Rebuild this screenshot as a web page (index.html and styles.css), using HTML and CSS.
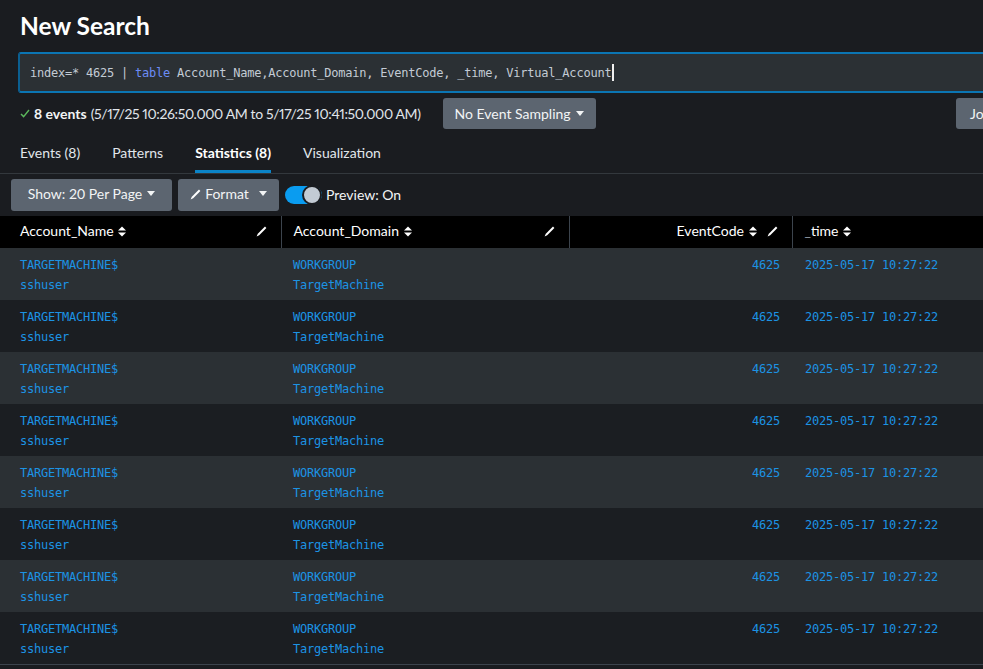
FILE: index.html
```html
<!DOCTYPE html>
<html>
<head>
<meta charset="utf-8">
<link rel="stylesheet" href="styles.css">
</head>
<body>
<div class="page">
  <h1 class="title">New Search</h1>

  <div class="search-bar">
    <span class="query">index=* 4625 | <span class="kw">table</span> Account_Name,Account_Domain, EventCode, _time, Virtual_Account</span><span class="caret"></span>
  </div>

  <div class="status">
    <svg class="check" width="10" height="9" viewBox="0 0 10 9"><path d="M1 5 L3.6 7.6 L9 1" fill="none" stroke="#5cb85c" stroke-width="1.4"/></svg>
    <span class="count">8 events</span>
    <span class="range">(5/17/25 10:26:50.000 AM to 5/17/25 10:41:50.000 AM)</span>
    <button class="btn sampling">No Event Sampling <span class="tri"></span></button>
    <button class="btn job">Job</button>
  </div>

  <nav class="tabs">
    <span class="tab">Events (8)</span>
    <span class="tab">Patterns</span>
    <span class="tab active">Statistics (8)</span>
    <span class="tab">Visualization</span>
  </nav>

  <div class="toolbar">
    <button class="btn show">Show: 20 Per Page <span class="tri"></span></button>
    <button class="btn format"><svg class="pen" width="11" height="11" viewBox="0 0 11 11"><path d="M9 0.6 L10.4 2 L3.2 9.2 L0.6 10.4 L1.8 7.8 Z" fill="#fff"/></svg>Format <span class="tri gap"></span></button>
    <span class="toggle"><span class="knob"></span></span>
    <span class="preview">Preview: On</span>
  </div>

  <table class="results">
    <colgroup>
      <col class="c1"><col class="c2"><col class="c3"><col class="c4">
    </colgroup>
    <thead>
      <tr>
        <th><span class="hl">Account_Name <svg class="sort" width="8" height="11" viewBox="0 0 8 11"><path d="M0 4.5 L4 0.5 L8 4.5 Z M0 6.5 L4 10.5 L8 6.5 Z" fill="#fff"/></svg></span><svg class="pen" width="11" height="11" viewBox="0 0 11 11"><path d="M9 0.6 L10.4 2 L3.2 9.2 L0.6 10.4 L1.8 7.8 Z" fill="#fff"/></svg></th>
        <th><span class="hl">Account_Domain <svg class="sort" width="8" height="11" viewBox="0 0 8 11"><path d="M0 4.5 L4 0.5 L8 4.5 Z M0 6.5 L4 10.5 L8 6.5 Z" fill="#fff"/></svg></span><svg class="pen" width="11" height="11" viewBox="0 0 11 11"><path d="M9 0.6 L10.4 2 L3.2 9.2 L0.6 10.4 L1.8 7.8 Z" fill="#fff"/></svg></th>
        <th class="num"><span class="hl">EventCode <svg class="sort" width="8" height="11" viewBox="0 0 8 11"><path d="M0 4.5 L4 0.5 L8 4.5 Z M0 6.5 L4 10.5 L8 6.5 Z" fill="#fff"/></svg></span><svg class="pen" width="11" height="11" viewBox="0 0 11 11"><path d="M9 0.6 L10.4 2 L3.2 9.2 L0.6 10.4 L1.8 7.8 Z" fill="#fff"/></svg></th>
        <th><span class="hl"><span class="us">_</span>time <svg class="sort" width="8" height="11" viewBox="0 0 8 11"><path d="M0 4.5 L4 0.5 L8 4.5 Z M0 6.5 L4 10.5 L8 6.5 Z" fill="#fff"/></svg></span></th>
      </tr>
    </thead>
    <tbody>
      <tr><td>TARGETMACHINE$<br>sshuser</td><td>WORKGROUP<br>TargetMachine</td><td class="num">4625</td><td>2025-05-17 10:27:22</td></tr>
      <tr><td>TARGETMACHINE$<br>sshuser</td><td>WORKGROUP<br>TargetMachine</td><td class="num">4625</td><td>2025-05-17 10:27:22</td></tr>
      <tr><td>TARGETMACHINE$<br>sshuser</td><td>WORKGROUP<br>TargetMachine</td><td class="num">4625</td><td>2025-05-17 10:27:22</td></tr>
      <tr><td>TARGETMACHINE$<br>sshuser</td><td>WORKGROUP<br>TargetMachine</td><td class="num">4625</td><td>2025-05-17 10:27:22</td></tr>
      <tr><td>TARGETMACHINE$<br>sshuser</td><td>WORKGROUP<br>TargetMachine</td><td class="num">4625</td><td>2025-05-17 10:27:22</td></tr>
      <tr><td>TARGETMACHINE$<br>sshuser</td><td>WORKGROUP<br>TargetMachine</td><td class="num">4625</td><td>2025-05-17 10:27:22</td></tr>
      <tr><td>TARGETMACHINE$<br>sshuser</td><td>WORKGROUP<br>TargetMachine</td><td class="num">4625</td><td>2025-05-17 10:27:22</td></tr>
      <tr><td>TARGETMACHINE$<br>sshuser</td><td>WORKGROUP<br>TargetMachine</td><td class="num">4625</td><td>2025-05-17 10:27:22</td></tr>
    </tbody>
  </table>
</div>
</body>
</html>
```

FILE: styles.css
```css
* { box-sizing: border-box; }
html, body {
  margin: 0;
  padding: 0;
  background: #1a1c20;
  overflow: hidden;
}
body {
  font-family: Lato, "Open Sans", sans-serif;
  color: #e1e6eb;
  font-size: 14px;
}
.page {
  width: 983px;
  height: 669px;
  overflow: hidden;
}
.title {
  margin: 0;
  padding: 12px 20px 0;
  font-size: 24.5px;
  line-height: 27px;
  font-weight: 700;
  color: #ffffff;
}
.search-bar {
  margin: 13px -40px 0 18px;
  height: 41px;
  background: #2b3034;
  border-top: 2px solid #0b75b3;
  border-bottom: 2px solid #0b75b3;
  border-left: 2px solid #0b5f91;
  border-radius: 3px 0 0 3px;
  display: flex;
  align-items: center;
  padding-left: 10px;
  font-family: "DejaVu Sans Mono", monospace;
  font-size: 12px;
  letter-spacing: -0.22px;
  color: #c3cbd4;
}
.kw { color: #6c8cf5; }
.caret {
  display: inline-block;
  width: 2px;
  height: 17px;
  background: #f0f0f0;
  margin-left: 1px;
}
.status {
  display: flex;
  align-items: center;
  margin: 5px -40px 0 0;
  padding-left: 20px;
  height: 31px;
}
.check { margin-right: 4px; }
.count { font-weight: 700; color: #f2f4f5; margin-right: 4px; }
.range {
  color: #e1e6eb;
  font-variant-numeric: proportional-nums;
  letter-spacing: -0.38px;
}
.btn {
  font-family: Lato, "Open Sans", sans-serif;
  font-size: 14px;
  color: #f2f4f5;
  background: #5c6570;
  border: 0;
  border-radius: 3px;
  display: inline-flex;
  align-items: center;
  justify-content: center;
  padding: 0 10px 1px;
  height: 31px;
}
.sampling { margin-left: 22px; width: 153px; }
.job { margin-left: auto; width: 67px; justify-content: flex-start; padding-left: 14px; }
.tri {
  display: inline-block;
  width: 0; height: 0;
  border-left: 4px solid transparent;
  border-right: 4px solid transparent;
  border-top: 5px solid #f2f4f5;
  margin-left: 5px;
}
.tri.gap { margin-left: 10px; }
.tabs {
  display: flex;
  gap: 32px;
  padding-left: 20px;
  margin-top: 10px;
  border-bottom: 1px solid #33383d;
  height: 35px;
}
.tab {
  color: #e1e6eb;
  line-height: 26px;
  padding-top: 1px;
  border-bottom: 3px solid transparent;
  height: 34px;
}
.tab.active {
  font-weight: 700;
  color: #ffffff;
  border-bottom-color: #0b84c8;
}
.toolbar {
  display: flex;
  align-items: center;
  padding-left: 11px;
  margin-top: 5px;
  height: 32px;
}
.toolbar .btn { height: 32px; padding-bottom: 3px; }
.show { width: 161px; }
.format { width: 101px; margin-left: 6px; }
.format .pen { margin-right: 4px; margin-top: 2px; }
.toggle {
  margin-left: 6px;
  width: 37px;
  height: 18px;
  border-radius: 9px;
  background: #0a9cf0;
  position: relative;
}
.knob {
  position: absolute;
  right: 0;
  top: -1px;
  width: 20px;
  height: 20px;
  border-radius: 50%;
  background: #c3cbd4;
  border: 2px solid #1a1c20;
}
.preview { margin-left: 4px; color: #f2f4f5; padding-bottom: 1px; }
.results {
  margin-top: 5px;
  width: 1000px;
  border-collapse: collapse;
  table-layout: fixed;
}
.c1 { width: 281px; }
.c2 { width: 288px; }
.c3 { width: 223px; }
.results th {
  background: #000;
  height: 32px;
  text-align: left;
  font-weight: 400;
  color: #ffffff;
  padding: 0 12px 3px 20px;
  border-left: 1px solid #3c444d;
  white-space: nowrap;
}
.results th:first-child { border-left: 0; }
.results th:nth-child(2) { padding-left: 12px; }
.results th:nth-child(4) { padding-left: 12px; }
.results th .pen { float: right; margin-top: 4px; margin-right: 2px; }
.results th.num { text-align: right; padding-right: 14px; }
.results th.num .pen { float: none; margin-left: 10px; margin-right: 0; vertical-align: -1px; }
.us { color: #9aa3ad; }
.sort {
  vertical-align: -1px;
  margin-left: 1px;
}
.results td {
  height: 52px;
  vertical-align: top;
  padding: 7px 12px 0 20px;
  font-family: "DejaVu Sans Mono", monospace;
  font-size: 12px;
  letter-spacing: -0.22px;
  line-height: 20px;
  color: #1c93e4;
}
.results td:nth-child(2) { padding-left: 12px; }
.results td:nth-child(4) { padding-left: 13px; }
.results td.num { text-align: right; padding-right: 12px; }
.results tbody tr:nth-child(odd) { background: #2b3034; }
.results tbody tr:nth-child(even) { background: #1b1e22; }
.results tbody tr:last-child td { border-bottom: 1px solid #3c444d; }
```
